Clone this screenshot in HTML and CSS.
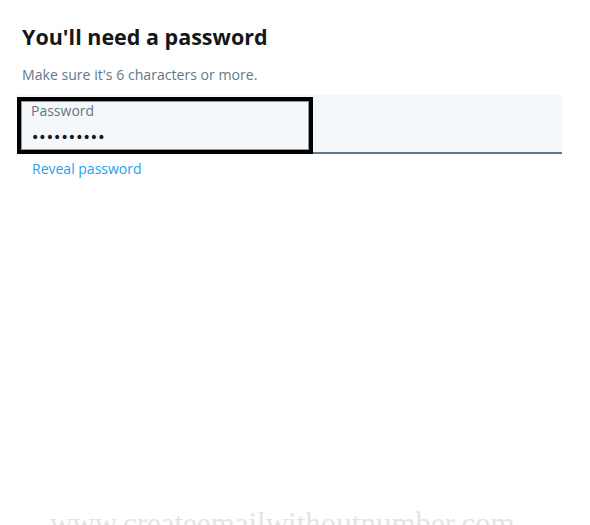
FILE: index.html
```html
<!DOCTYPE html>
<html>
<head>
<meta charset="utf-8">
<link rel="stylesheet" href="styles.css">
</head>
<body>
<main class="page">
  <h1 class="title">You'll need a password</h1>
  <p class="subtitle">Make sure it's 6 characters or more.</p>
  <div class="field">
    <div class="focus-box">
      <span class="label">Password</span>
      <span class="dots">••••••••••</span>
    </div>
  </div>
  <a class="reveal" href="#">Reveal password</a>
</main>
<div class="watermark">www.createemailwithoutnumber.com</div>
</body>
</html>
```
FILE: styles.css
```css
html, body {
  margin: 0;
  padding: 0;
  background: #ffffff;
}
body {
  width: 590px;
  height: 525px;
  overflow: hidden;
  position: relative;
  font-family: "Open Sans", "Noto Sans", sans-serif;
}
.page {
  display: flex;
  flex-direction: column;
  padding: 22px 28px 0 18px;
}
.title {
  margin: 0 0 0 4px;
  font-size: 21.5px;
  line-height: 30px;
  font-weight: 700;
  color: #14171a;
  letter-spacing: 0;
}
.subtitle {
  margin: 14px 0 0 4px;
  font-size: 14.1px;
  line-height: 18px;
  color: #657786;
}
.field {
  margin-top: 11px;
  width: 544px;
  height: 59px;
  background: #f5f8fa;
  border-bottom: 2px solid #657786;
  box-sizing: border-box;
  display: flex;
  align-items: flex-end;
}
.focus-box {
  width: 296px;
  height: 57px;
  margin-left: -1px;
  margin-bottom: -2px;
  border: 4px solid #000000;
  box-shadow: inset 0 0 0 1px #8a96a0;
  box-sizing: border-box;
  display: flex;
  flex-direction: column;
  padding: 0 0 0 10px;
}
.label {
  font-size: 14px;
  line-height: 16px;
  color: #657786;
  margin-top: 2px;
}
.dots {
  font-family: "DejaVu Sans", sans-serif;
  font-size: 14px;
  line-height: 18px;
  letter-spacing: -0.9px;
  color: #14171a;
  margin-top: 9px;
}
.reveal {
  margin: 6px 0 0 14px;
  font-size: 14px;
  line-height: 18px;
  color: #1da1f2;
  text-decoration: none;
}
.watermark {
  position: absolute;
  left: 50px;
  top: 507px;
  font-family: "Liberation Serif", serif;
  font-size: 31px;
  line-height: 34px;
  color: #e4e4e4;
  white-space: nowrap;
}
```
